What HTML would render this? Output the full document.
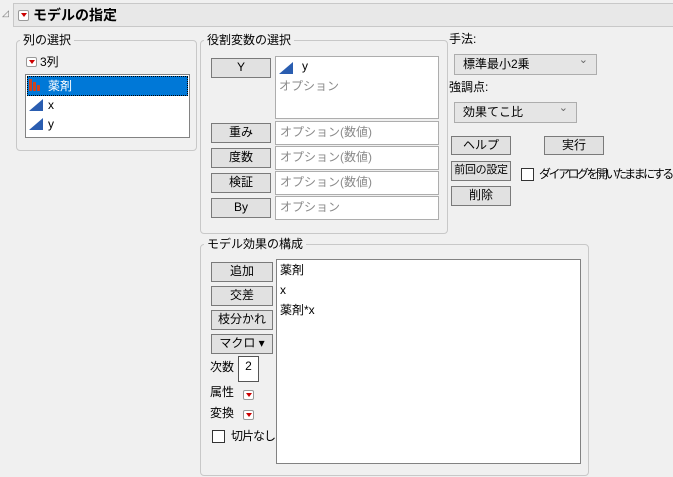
<!DOCTYPE html>
<html><head><meta charset="utf-8"><style>
*{box-sizing:border-box;margin:0;padding:0}
body{width:673px;height:477px;background:#f0f0f0;position:relative;overflow:hidden;font-family:"Liberation Sans","Noto Sans CJK JP",sans-serif;font-size:12px;color:#000}
div{white-space:nowrap}
.a{position:absolute}
.grp{position:absolute;border:1px solid #c8c8c8;border-radius:4px}
.lbl{position:absolute;background:#f0f0f0;padding:0 3px;font-size:12px;line-height:14px}
.btn{position:absolute;background:#e1e1e1;border:1px solid #7a7a7a;text-align:center;font-size:12px;line-height:17px}
.box{position:absolute;background:#fff;border:1px solid #adadad}
.ph{color:#8a8a8a;font-size:12px;line-height:20px;padding-left:4px}
.dd{position:absolute;width:11px;height:10px;border:1px solid #999;background:#fff;border-radius:2px}
.dd:after{content:"";position:absolute;left:2px;top:2px;border-left:3px solid transparent;border-right:3px solid transparent;border-top:4px solid #c00}
.sel{position:absolute;background:#e5e5e5;border:1px solid #adadad;font-size:12px;line-height:18px;padding-left:8px}
.sel:after{content:"⌄";position:absolute;right:8px;top:-4px;color:#666;font-size:11px}
.cb{position:absolute;width:13px;height:13px;background:#fff;border:1px solid #333}
.tri{position:absolute;width:0;height:0;border-bottom:12px solid #2a5db0;border-left:14px solid transparent}
</style></head><body>
<div class="a" style="left:2px;top:8px;font-size:9px;color:#777">◿</div>
<div class="a" style="left:13px;top:3px;width:660px;height:24px;background:#e8e8e8;border:1px solid #c8c8c8;border-right:none"></div>
<div class="dd" style="left:18px;top:10px;width:11px;height:11px"></div>
<div class="a" style="left:33px;top:6px;font-size:14px;font-weight:bold;line-height:18px">モデルの指定</div>

<div class="grp" style="left:16px;top:40px;width:181px;height:111px"></div>
<div class="lbl" style="left:20px;top:33px">列の選択</div>
<div class="dd" style="left:26px;top:57px"></div>
<div class="a" style="left:40px;top:54px;line-height:16px">3列</div>
<div class="box" style="left:25px;top:74px;width:165px;height:64px;border-color:#828282"></div>
<div class="a" style="left:27px;top:76px;width:161px;height:20px;background:#0078d7;border:1px dotted #000"></div>
<div class="a" style="left:29px;top:79px;width:3px;height:12px;background:#c42"></div>
<div class="a" style="left:33px;top:82px;width:3px;height:9px;background:#c42"></div>
<div class="a" style="left:37px;top:85px;width:3px;height:6px;background:#c42"></div>
<div class="a" style="left:48px;top:78px;color:#fff;line-height:16px">薬剤</div>
<div class="tri" style="left:29px;top:99px"></div>
<div class="a" style="left:48px;top:97px;line-height:16px">x</div>
<div class="tri" style="left:29px;top:118px"></div>
<div class="a" style="left:48px;top:116px;line-height:16px">y</div>

<div class="grp" style="left:200px;top:40px;width:248px;height:194px"></div>
<div class="lbl" style="left:204px;top:33px">役割変数の選択</div>
<div class="btn" style="left:211px;top:58px;width:60px;height:20px">Y</div>
<div class="box" style="left:275px;top:56px;width:164px;height:63px"></div>
<div class="tri" style="left:279px;top:62px"></div>
<div class="a" style="left:302px;top:58px;line-height:16px">y</div>
<div class="a" style="left:279px;top:78px;color:#8a8a8a;line-height:16px">オプション</div>
<div class="btn" style="left:211px;top:123px;width:60px;height:20px">重み</div>
<div class="box ph" style="left:275px;top:121px;width:164px;height:24px">オプション(数値)</div>
<div class="btn" style="left:211px;top:148px;width:60px;height:20px">度数</div>
<div class="box ph" style="left:275px;top:146px;width:164px;height:24px">オプション(数値)</div>
<div class="btn" style="left:211px;top:173px;width:60px;height:20px">検証</div>
<div class="box ph" style="left:275px;top:171px;width:164px;height:24px">オプション(数値)</div>
<div class="btn" style="left:211px;top:198px;width:60px;height:20px">By</div>
<div class="box ph" style="left:275px;top:196px;width:164px;height:24px">オプション</div>

<div class="a" style="left:449px;top:31px;line-height:16px">手法:</div>
<div class="sel" style="left:454px;top:54px;width:143px;height:21px">標準最小2乗</div>
<div class="a" style="left:449px;top:79px;line-height:16px">強調点:</div>
<div class="sel" style="left:454px;top:102px;width:123px;height:21px">効果てこ比</div>
<div class="btn" style="left:451px;top:136px;width:60px;height:19px">ヘルプ</div>
<div class="btn" style="left:544px;top:136px;width:60px;height:19px">実行</div>
<div class="btn" style="left:451px;top:161px;width:60px;height:20px;font-size:11px;letter-spacing:-0.3px">前回の設定</div>
<div class="cb" style="left:521px;top:168px"></div>
<div class="a" style="left:539px;top:166px;line-height:16px;letter-spacing:-2.5px">ダイアログを開いたままにする</div>
<div class="btn" style="left:451px;top:186px;width:60px;height:20px">削除</div>

<div class="grp" style="left:200px;top:244px;width:389px;height:232px"></div>
<div class="lbl" style="left:204px;top:237px">モデル効果の構成</div>
<div class="btn" style="left:211px;top:262px;width:62px;height:20px">追加</div>
<div class="btn" style="left:211px;top:286px;width:62px;height:20px">交差</div>
<div class="btn" style="left:211px;top:310px;width:62px;height:20px">枝分かれ</div>
<div class="btn" style="left:211px;top:334px;width:62px;height:20px">マクロ ▾</div>
<div class="a" style="left:210px;top:359px;line-height:16px">次数</div>
<div class="box" style="left:238px;top:356px;width:21px;height:26px;border-color:#555;text-align:center;line-height:18px">2</div>
<div class="a" style="left:210px;top:384px;line-height:16px">属性</div>
<div class="dd" style="left:243px;top:390px"></div>
<div class="a" style="left:210px;top:405px;line-height:16px">変換</div>
<div class="dd" style="left:243px;top:410px"></div>
<div class="cb" style="left:212px;top:430px"></div>
<div class="a" style="left:231px;top:428px;line-height:16px;letter-spacing:-1px">切片なし</div>
<div class="box" style="left:276px;top:259px;width:305px;height:205px;border-color:#828282"></div>
<div class="a" style="left:280px;top:262px;line-height:16px">薬剤</div>
<div class="a" style="left:280px;top:282px;line-height:16px">x</div>
<div class="a" style="left:280px;top:302px;line-height:16px">薬剤*x</div>
</body></html>
